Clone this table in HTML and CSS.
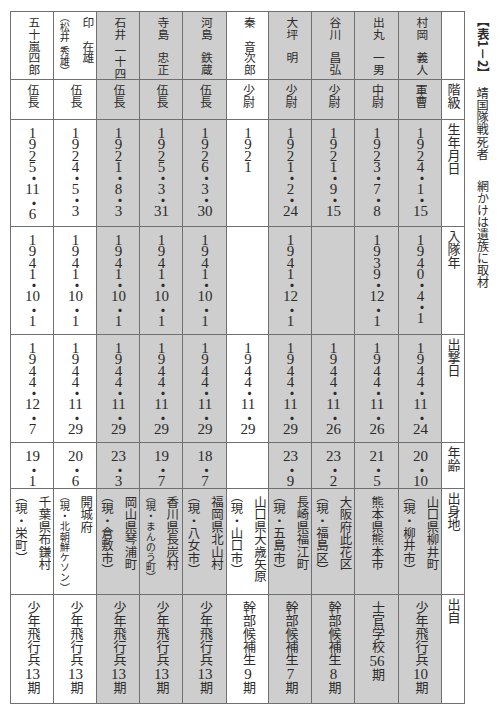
FILE: index.html
```html
<!DOCTYPE html>
<html lang="ja">
<head>
<meta charset="utf-8">
<title>表1－2 靖国隊戦死者</title>
<link rel="stylesheet" href="styles.css">
</head>
<body>
<div class="page">
  <div class="table">
    <!-- 氏名 -->
    <div class="c name"><div class="ln">五十嵐四郎</div></div>
    <div class="c name two"><div class="ln">印　在雄</div><div class="ln sub"><span class="p">（</span>松井<span class="sp"></span>秀雄<span class="p">）</span></div></div>
    <div class="c name"><div class="ln">石井<span class="sp2"></span>一十四</div></div>
    <div class="c name"><div class="ln">寺島　忠正</div></div>
    <div class="c name"><div class="ln">河島　鉄蔵</div></div>
    <div class="c name"><div class="ln">秦　音次郎</div></div>
    <div class="c name"><div class="ln">大坪　明</div></div>
    <div class="c name"><div class="ln">谷川　昌弘</div></div>
    <div class="c name"><div class="ln">出丸　一男</div></div>
    <div class="c name"><div class="ln">村岡　義人</div></div>
    <div class="c head"></div>

    <!-- 階級 -->
    <div class="c rank"><div class="ln">伍長</div></div>
    <div class="c rank"><div class="ln">伍長</div></div>
    <div class="c rank"><div class="ln">伍長</div></div>
    <div class="c rank"><div class="ln">伍長</div></div>
    <div class="c rank"><div class="ln">伍長</div></div>
    <div class="c rank"><div class="ln">少尉</div></div>
    <div class="c rank"><div class="ln">少尉</div></div>
    <div class="c rank"><div class="ln">少尉</div></div>
    <div class="c rank"><div class="ln">中尉</div></div>
    <div class="c rank"><div class="ln">軍曹</div></div>
    <div class="c head"><div class="ln">階級</div></div>

    <!-- 生年月日 -->
    <div class="c num"><div class="ln">1925・<span class="t">11</span>・6</div></div>
    <div class="c num"><div class="ln">1924・5・3</div></div>
    <div class="c num"><div class="ln">1921・8・3</div></div>
    <div class="c num"><div class="ln">1925・3・<span class="t">31</span></div></div>
    <div class="c num"><div class="ln">1926・3・<span class="t">30</span></div></div>
    <div class="c num"><div class="ln">1921</div></div>
    <div class="c num"><div class="ln">1921・2・<span class="t">24</span></div></div>
    <div class="c num"><div class="ln">1921・9・<span class="t">15</span></div></div>
    <div class="c num"><div class="ln">1923・7・8</div></div>
    <div class="c num"><div class="ln">1924・1・<span class="t">15</span></div></div>
    <div class="c head"><div class="ln">生年月日</div></div>

    <!-- 入隊年 -->
    <div class="c num"><div class="ln">1941・<span class="t">10</span>・1</div></div>
    <div class="c num"><div class="ln">1941・<span class="t">10</span>・1</div></div>
    <div class="c num"><div class="ln">1941・<span class="t">10</span>・1</div></div>
    <div class="c num"><div class="ln">1941・<span class="t">10</span>・1</div></div>
    <div class="c num"><div class="ln">1941・<span class="t">10</span>・1</div></div>
    <div class="c num"></div>
    <div class="c num"><div class="ln">1941・<span class="t">12</span>・1</div></div>
    <div class="c num"></div>
    <div class="c num"><div class="ln">1939・<span class="t">12</span>・1</div></div>
    <div class="c num"><div class="ln">1940・4・1</div></div>
    <div class="c head"><div class="ln">入隊年</div></div>

    <!-- 出撃日 -->
    <div class="c num"><div class="ln">1944・<span class="t">12</span>・7</div></div>
    <div class="c num"><div class="ln">1944・<span class="t">11</span>・<span class="t">29</span></div></div>
    <div class="c num"><div class="ln">1944・<span class="t">11</span>・<span class="t">29</span></div></div>
    <div class="c num"><div class="ln">1944・<span class="t">11</span>・<span class="t">29</span></div></div>
    <div class="c num"><div class="ln">1944・<span class="t">11</span>・<span class="t">29</span></div></div>
    <div class="c num"><div class="ln">1944・<span class="t">11</span>・<span class="t">29</span></div></div>
    <div class="c num"><div class="ln">1944・<span class="t">11</span>・<span class="t">29</span></div></div>
    <div class="c num"><div class="ln">1944・<span class="t">11</span>・<span class="t">26</span></div></div>
    <div class="c num"><div class="ln">1944・<span class="t">11</span>・<span class="t">26</span></div></div>
    <div class="c num"><div class="ln">1944・<span class="t">11</span>・<span class="t">24</span></div></div>
    <div class="c head"><div class="ln">出撃日</div></div>

    <!-- 年齢 -->
    <div class="c num"><div class="ln"><span class="t">19</span>・1</div></div>
    <div class="c num"><div class="ln"><span class="t">20</span>・6</div></div>
    <div class="c num"><div class="ln"><span class="t">23</span>・3</div></div>
    <div class="c num"><div class="ln"><span class="t">19</span>・7</div></div>
    <div class="c num"><div class="ln"><span class="t">18</span>・7</div></div>
    <div class="c num"></div>
    <div class="c num"><div class="ln"><span class="t">23</span>・9</div></div>
    <div class="c num"><div class="ln"><span class="t">23</span>・2</div></div>
    <div class="c num"><div class="ln"><span class="t">21</span>・5</div></div>
    <div class="c num"><div class="ln"><span class="t">20</span>・<span class="t">10</span></div></div>
    <div class="c head"><div class="ln">年齢</div></div>

    <!-- 出身地 -->
    <div class="c place"><div class="ln">千葉県布鎌村</div><div class="ln"><span class="p">（</span>現・栄町<span class="p">）</span></div></div>
    <div class="c place"><div class="ln">開城府</div><div class="ln small"><span class="p">（</span>現・北朝鮮ケソン<span class="p">）</span></div></div>
    <div class="c place"><div class="ln">岡山県琴浦町</div><div class="ln"><span class="p">（</span>現・倉敷市<span class="p">）</span></div></div>
    <div class="c place"><div class="ln">香川県長炭村</div><div class="ln small"><span class="p">（</span>現・まんのう町<span class="p">）</span></div></div>
    <div class="c place"><div class="ln">福岡県北山村</div><div class="ln"><span class="p">（</span>現・八女市<span class="p">）</span></div></div>
    <div class="c place"><div class="ln">山口県大歳矢原</div><div class="ln"><span class="p">（</span>現・山口市<span class="p">）</span></div></div>
    <div class="c place"><div class="ln">長崎県福江町</div><div class="ln"><span class="p">（</span>現・五島市<span class="p">）</span></div></div>
    <div class="c place"><div class="ln">大阪府此花区</div><div class="ln"><span class="p">（</span>現・福島区<span class="p">）</span></div></div>
    <div class="c place"><div class="ln">熊本県熊本市</div></div>
    <div class="c place"><div class="ln">山口県柳井町</div><div class="ln"><span class="p">（</span>現・柳井市<span class="p">）</span></div></div>
    <div class="c head"><div class="ln">出身地</div></div>

    <!-- 出自 -->
    <div class="c orig"><div class="ln">少年飛行兵<span class="t n">13</span>期</div></div>
    <div class="c orig"><div class="ln">少年飛行兵<span class="t n">13</span>期</div></div>
    <div class="c orig"><div class="ln">少年飛行兵<span class="t n">13</span>期</div></div>
    <div class="c orig"><div class="ln">少年飛行兵<span class="t n">13</span>期</div></div>
    <div class="c orig"><div class="ln">少年飛行兵<span class="t n">13</span>期</div></div>
    <div class="c orig"><div class="ln">幹部候補生<span class="t n">9</span>期</div></div>
    <div class="c orig"><div class="ln">幹部候補生<span class="t n">7</span>期</div></div>
    <div class="c orig"><div class="ln">幹部候補生<span class="t n">8</span>期</div></div>
    <div class="c orig"><div class="ln">士官学校<span class="t n">56</span>期</div></div>
    <div class="c orig"><div class="ln">少年飛行兵<span class="t n">10</span>期</div></div>
    <div class="c head"><div class="ln">出自</div></div>
  </div>

  <div class="title">
    <div class="tl tt">【表1－2】</div>
    <div class="tl t1">靖国隊戦死者</div>
    <div class="tl t2">網かけは遺族に取材</div>
  </div>
</div>
</body>
</html>
```

FILE: styles.css
```css
* {
  box-sizing: border-box;
  margin: 0;
  padding: 0;
}

html, body {
  background: #ffffff;
}

body {
  width: 500px;
  height: 714px;
  overflow: hidden;
  font-family: "Liberation Serif", "Noto Sans CJK JP", serif;
  color: #2b2b2b;
}

.page {
  display: flex;
  align-items: flex-start;
  padding: 11px 0 0 10px;
}

.table {
  display: grid;
  grid-template-columns: 42px 42px 42px 42px 43px 41px 42px 42px 43px 42px 22px;
  grid-template-rows: 67px 39px 106px 107px 107px 45px 105px 108px;
  gap: 1px;
  background: #707070;
  border: 1px solid #707070;
}

.c {
  background: #ffffff;
  display: flex;
  flex-direction: row-reverse;
  justify-content: center;
  align-items: flex-start;
  gap: 11px;
  padding-top: 5px;
}

.c:nth-child(11n+3),
.c:nth-child(11n+4),
.c:nth-child(11n+5),
.c:nth-child(11n+7),
.c:nth-child(11n+8),
.c:nth-child(11n+9),
.c:nth-child(11n+10) {
  background: #cecece;
}

.ln {
  writing-mode: vertical-rl;
  line-height: 1;
  white-space: nowrap;
}

.t {
  text-combine-upright: all;
}

.p {
  font-feature-settings: "vhal";
}

/* 氏名 */
.name {
  font-size: 11.7px;
  padding-top: 5px;
}

.name.two {
  gap: 12px;
}

.name .sub {
  font-size: 10px;
}

.sp {
  display: inline-block;
  block-size: 1px;
  inline-size: 4px;
}

.sp2 {
  display: inline-block;
  block-size: 1px;
  inline-size: 4px;
}

/* 階級 */
.rank {
  font-size: 12px;
  padding-top: 4px;
}

/* 数字 */
.num {
  font-size: 15px;
  padding-top: 5px;
}

.num .ln {
  text-orientation: upright;
  letter-spacing: -4.6px;
}

/* 出身地 */
.place {
  font-size: 12.4px;
  padding-top: 7px;
}

.place .small {
  font-size: 10.2px;
}

/* 出自 */
.orig {
  font-size: 13px;
  padding-top: 6px;
}

.orig .n {
  font-size: 15px;
  margin-block: 2px;
}

/* 見出し列 */
.head {
  font-size: 13px;
  padding-top: 3px;
}

/* 表題 */
.title {
  width: 35px;
  display: flex;
  flex-direction: column;
  align-items: center;
  padding-top: 4px;
  font-family: "Noto Sans CJK JP", sans-serif;
  color: #2b2b2b;
}

.tl {
  writing-mode: vertical-rl;
  line-height: 1;
  white-space: nowrap;
}

.tt {
  font-size: 12.5px;
  font-weight: 700;
}

.t1 {
  font-size: 12.2px;
  margin-top: 7px;
}

.t2 {
  font-size: 12px;
  margin-top: 20px;
}
```
